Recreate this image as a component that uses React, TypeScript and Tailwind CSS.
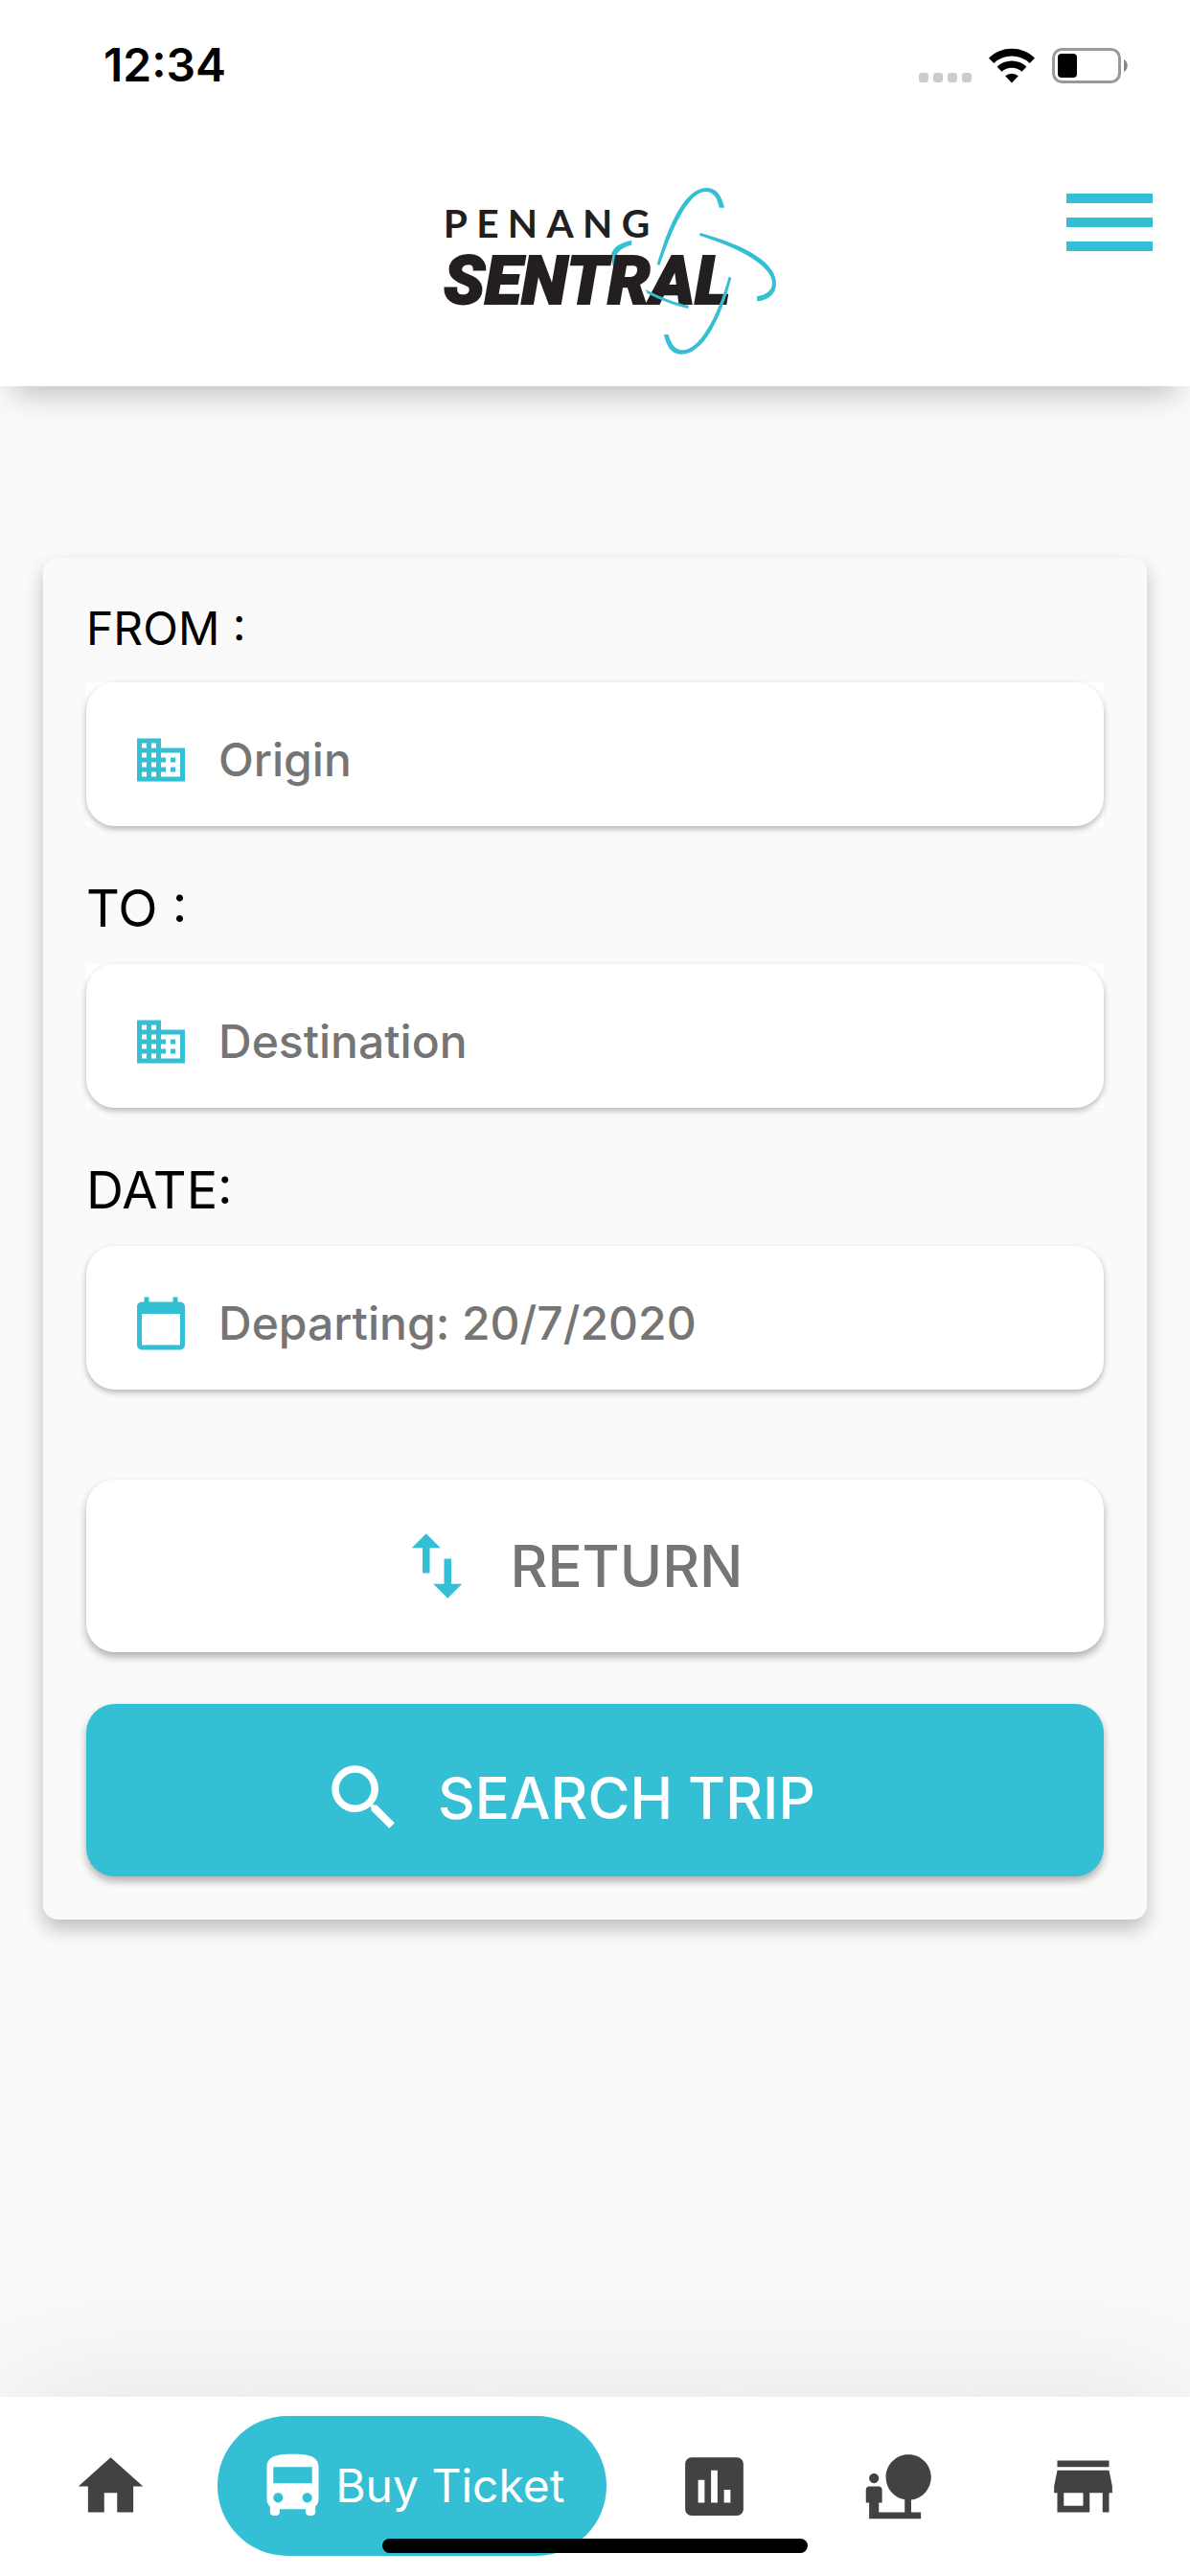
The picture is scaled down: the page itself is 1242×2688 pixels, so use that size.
import type { ReactNode } from "react";
import {
  MdAssessment,
  MdBusiness,
  MdDirectionsBus,
  MdHome,
  MdNaturePeople,
  MdSearch,
  MdStore,
  MdSwapVert,
} from "react-icons/md";

function StatusBar() {
  return (
    <div className="flex h-33 items-center justify-between pt-1 pr-16 pl-27">
      <span className="text-5xl leading-none font-semibold text-black">12:34</span>
      <div className="flex items-end gap-[18px]">
        <div className="flex gap-[5px] pb-px">
          {[0, 1, 2, 3].map((i) => (
            <span key={i} className="size-[10px] rounded-[3px] bg-[#cccccc]" />
          ))}
        </div>
        <svg className="h-[37px] w-12" viewBox="0 0 48 37" fill="none" aria-label="Wi-Fi">
          <path d="M2.6 13.2a31 31 0 0 1 42.8 0" stroke="#000" strokeWidth="7.6" />
          <path d="M11 22.2a19 19 0 0 1 26 0" stroke="#000" strokeWidth="7.2" />
          <path d="M24 36.5l-6.8-7.2a10 10 0 0 1 13.6 0z" fill="#000" />
        </svg>
        <svg className="h-[37px] w-20" viewBox="0 0 80 37" fill="none" aria-label="Battery">
          <rect x="1.5" y="1.5" width="69" height="34" rx="9" stroke="#999" strokeWidth="3" />
          <rect x="6" y="6" width="20" height="25" rx="4" fill="#000" />
          <path d="M75 12c5 2.500 5 10.500 0 13z" fill="#888" />
        </svg>
      </div>
    </div>
  );
}

function Logo() {
  return (
    <svg className="h-[220px] w-[400px]" viewBox="-57 0 1200 660" role="img" aria-label="Penang Sentral">
      <path
        d="M658 242 C615 250 590 272 594 300 C597 318 601 330 608 342 L609 310 C602 288 620 266 657 257 Z"
        fill="#35bfd4"
      />
      <text x="68" y="234" fontSize="122" className="font-[Lato] font-bold tracking-[28px]" fill="#231f20">
        PENANG
      </text>
      <text
        x="70"
        y="440"
        fontSize="211"
        className="font-[Roboto] font-black italic"
        fill="#231f20"
        stroke="#231f20"
        strokeWidth="6"
      >
        SENTRAL
      </text>
      <g fill="#35bfd4">
        <path d="M737 317 C775 190 825 78 893 78 C925 78 941 106 948 140 L932 140 C926 110 914 90 890 90 C840 90 790 190 745 321 Z" />
        <path d="M872 219 C1005 255 1110 308 1110 378 C1110 408 1088 430 1050 433 L1050 418 C1078 414 1098 400 1098 376 C1098 325 1000 268 870 227 Z" />
        <path d="M701 396 C745 419 790 437 837 447 L834 456 C790 446 745 428 707 409 Z" />
        <path d="M962 356 L970 359 C935 495 880 599 813 599 C780 599 765 570 759 537 L773 537 C780 565 793 586 817 586 C867 586 925 490 962 356 Z" />
      </g>
    </svg>
  );
}

function CalendarIcon() {
  return (
    <svg className="size-15 shrink-0 text-[#35bfd4]" viewBox="0 0 24 24" fill="currentColor" aria-hidden="true">
      <path d="M20 3h-1V1h-2v2H7V1H5v2H4c-1.100 0-2 .9-2 2v16c0 1.100.9 2 2 2h16c1.100 0 2-.9 2-2V5c0-1.100-.9-2-2-2zm0 18H4V8h16v13z" />
    </svg>
  );
}

type FieldProps = {
  id: string;
  icon: ReactNode;
  placeholder?: string;
  value?: string;
};

function Field({ id, icon, placeholder, value }: FieldProps) {
  return (
    <div className={value ? "" : "bg-white"}>
      <div className="flex h-[150px] items-center gap-[30px] rounded-[30px] bg-white pt-3 pr-12 pl-12 shadow-[0_3px_6px_rgba(0,0,0,0.28)]">
        {icon}
        <input
          id={id}
          type="text"
          placeholder={placeholder}
          defaultValue={value}
          className="min-w-0 flex-1 bg-transparent text-[48px] leading-[60px] font-medium text-[#757575] outline-none placeholder:text-[#757575]"
        />
      </div>
    </div>
  );
}

function NavButton({ label, children }: { label: string; children: ReactNode }) {
  return (
    <button type="button" aria-label={label} className="flex h-[146px] w-40 items-center justify-center text-[#424242]">
      {children}
    </button>
  );
}

export default function App() {
  const business = <MdBusiness className="size-15 shrink-0 text-[#35bfd4]" />;
  return (
    <div className="flex min-h-screen flex-col bg-[#fafafa] font-[Inter,sans-serif] text-black">
      <header className="bg-white shadow-[0_22px_30px_-14px_rgba(0,0,0,0.24)]">
        <StatusBar />
        <div className="grid grid-cols-[1fr_auto_1fr] items-start px-[39px] pt-[38px] pb-[13px]">
          <div className="col-start-2">
            <Logo />
          </div>
          <button type="button" aria-label="Menu" className="mt-8 flex w-[90px] flex-col gap-[15px] justify-self-end">
            <span className="h-[10px] w-full bg-[#35bfd4]" />
            <span className="h-[10px] w-full bg-[#35bfd4]" />
            <span className="h-[10px] w-full bg-[#35bfd4]" />
          </button>
        </div>
      </header>

      <main className="flex-1 px-[45px] pt-[179px]">
        <form
          className="flex flex-col rounded-[15px] bg-[#fafafa] p-[45px] shadow-[0_10px_20px_rgba(0,0,0,0.24)]"
          onSubmit={(e) => e.preventDefault()}
        >
          <label htmlFor="origin" className="mb-[27px] text-[48px] leading-[58px]">
            FROM :
          </label>
          <Field id="origin" icon={business} placeholder="Origin" />
          <label htmlFor="destination" className="mt-[54px] mb-[26px] text-[54px] leading-[64px]">
            TO :
          </label>
          <Field id="destination" icon={business} placeholder="Destination" />
          <label htmlFor="date" className="mt-[54px] mb-[26px] text-[54px] leading-[64px]">
            DATE:
          </label>
          <Field id="date" icon={<CalendarIcon />} value="Departing: 20/7/2020" />

          <button
            type="button"
            className="mt-[94px] flex h-[180px] items-center justify-center gap-8 rounded-[30px] bg-white pr-14 text-[60px] leading-none font-medium text-[#757575] shadow-[0_5px_9px_rgba(0,0,0,0.3)]"
          >
            <MdSwapVert className="size-[90px]" color="#35bfd4" />
            RETURN
          </button>
          <button
            type="submit"
            className="mt-[54px] flex h-[180px] items-center justify-center gap-8 rounded-[30px] bg-[#35bfd4] pt-4 pr-14 text-[60px] leading-none font-medium text-white shadow-[0_5px_9px_rgba(0,0,0,0.3)]"
          >
            <MdSearch className="size-[90px]" />
            SEARCH TRIP
          </button>
        </form>
      </main>

      <nav className="relative flex h-[187px] items-start justify-between bg-white pt-5 pr-8 pl-[35px] shadow-[0_0_150px_rgba(0,0,0,0.1)]">
        <NavButton label="Home">
          <MdHome className="size-[81px]" />
        </NavButton>
        <button
          type="button"
          aria-current="page"
          className="flex h-[146px] items-center rounded-full bg-[#35bfd4] pr-11 pl-[38px] text-[48px] leading-none text-white"
        >
          <MdDirectionsBus className="mr-1 size-[81px]" />
          Buy Ticket
        </button>
        <NavButton label="Reports">
          <MdAssessment className="size-[81px]" />
        </NavButton>
        <NavButton label="Attractions">
          <MdNaturePeople className="size-[81px]" />
        </NavButton>
        <NavButton label="Store">
          <MdStore className="size-[81px]" />
        </NavButton>
        <div className="absolute bottom-6 left-1/2 h-[15px] w-[444px] -translate-x-1/2 rounded-full bg-black" />
      </nav>
    </div>
  );
}
